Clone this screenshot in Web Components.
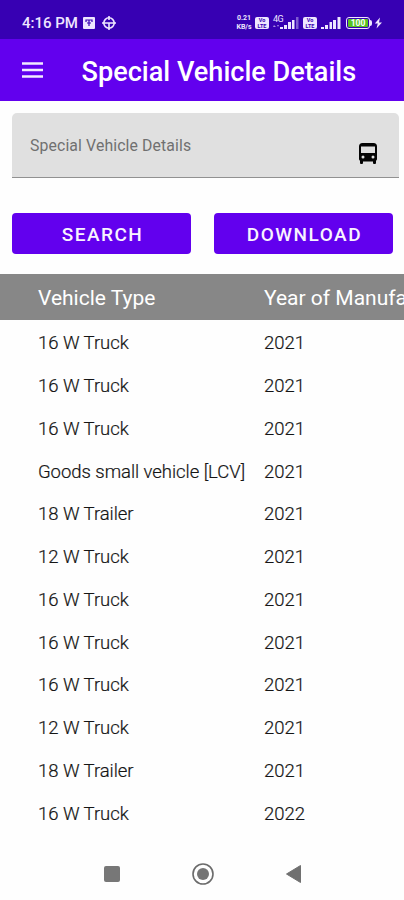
<!DOCTYPE html>
<html lang="en">
<head>
<meta charset="utf-8">
<title>Special Vehicle Details</title>
<style>
  body {
    margin: 0;
    background: #fefefe;
    font-family: Roboto, "Liberation Sans", sans-serif;
    overflow: hidden;
  }
</style>
</head>
<body>
<vehicle-screen></vehicle-screen>

<script>
class StatusBar extends HTMLElement {
  constructor() {
    super();
    const shadow = this.attachShadow({ mode: 'open' });
    shadow.innerHTML = `
    <style>
      :host {
        display: flex;
        align-items: center;
        box-sizing: border-box;
        height: 39px;
        padding: 6px 21px 0 22px;
        background: #3700b3;
        color: #eee6ff;
      }

      .time {
        width: 61px;
        font-size: 15px;
        font-weight: 500;
        white-space: nowrap;
      }

      .right {
        display: flex;
        align-items: center;
        margin-left: auto;
      }

      .speed {
        width: 18px;
        margin-right: 2px;
        font-size: 7px;
        font-weight: 700;
        line-height: 8.5px;
        text-align: center;
      }

      .volte {
        width: 14px;
        height: 12px;
        border-radius: 2px;
        background: #eee6ff;
        color: #3700b3;
        font-size: 5.5px;
        font-weight: 700;
        line-height: 6px;
        text-align: center;
      }

      .network {
        display: flex;
        align-items: flex-end;
        position: relative;
        width: 26px;
        height: 14px;
        margin: 0 4px 0 4px;
      }

      .network span {
        position: absolute;
        top: -1px;
        left: 0;
        font-size: 9px;
        line-height: 8px;
        letter-spacing: -0.5px;
      }

      .battery {
        box-sizing: border-box;
        width: 24px;
        height: 12px;
        margin-left: 5px;
        padding: 1px;
        border: 1px solid #eee6ff;
        border-radius: 3px;
      }

      .battery div {
        height: 8px;
        border-radius: 1px;
        background: #58c322;
        color: #fff;
        font-size: 8.5px;
        font-weight: 700;
        line-height: 8.5px;
        text-align: center;
      }

      .tip {
        width: 2px;
        height: 6px;
        border-radius: 0 2px 2px 0;
        background: #eee6ff;
      }

      svg {
        display: block;
        flex: none;
      }
    </style>
    <div class="time">4:16 PM</div>
    <svg width="12" height="12" viewBox="0 0 12 12">
      <rect width="12" height="12" rx="1" fill="#eee6ff"/>
      <path d="M3 5V3h6v2M6 3v6M4 6h4" fill="none" stroke="#3700b3" stroke-width="1.2"/>
    </svg>
    <svg width="14" height="14" viewBox="0 0 14 14" style="margin-left:7px" fill="none" stroke="#eee6ff" stroke-width="1.6">
      <circle cx="7" cy="7" r="5.2"/>
      <path d="M0 7h14M7 7v7M7 0v4"/>
    </svg>
    <div class="right">
      <div class="speed">0.21<br>KB/s</div>
      <div class="volte">Vo<br>LTE</div>
      <div class="network">
        <span>4G</span>
        <svg width="26" height="14" viewBox="0 0 26 14" fill="#eee6ff">
          <path d="M1 9l2 2H0zM4 9h2l-1 2z" opacity=".6"/>
          <path d="M7 11h3v2H7zM11 9h3v4h-3zM15 6h3v7h-3zM19 4h2.500v9H19z"/>
          <path d="M23 1h2.500v12H23z" opacity=".4"/>
        </svg>
      </div>
      <div class="volte">Vo<br>LTE</div>
      <svg width="20" height="14" viewBox="0 0 20 14" style="margin-left:4px" fill="#eee6ff">
        <path d="M0 11h3v2H0zM4 9h3v4H4zM8.500 6h2.500v7H8.500zM12 4h3v9h-3zM16.500 1h3v12h-3z"/>
      </svg>
      <div class="battery"><div>100</div></div>
      <div class="tip"></div>
      <svg width="10" height="12" viewBox="0 0 10 12" style="margin-left:1px" fill="#eee6ff">
        <path d="M7 .5L1.800 6.500h3L3.500 11.500 9 5.500H6z"/>
      </svg>
    </div>
    `;
  }
}

class AppBar extends HTMLElement {
  constructor() {
    super();
    const shadow = this.attachShadow({ mode: 'open' });
    shadow.innerHTML = `
    <style>
      :host {
        display: flex;
        align-items: center;
        height: 62px;
        padding-left: 22px;
        background: #6200ee;
        color: #fff;
      }

      svg {
        flex: none;
      }

      h1 {
        margin: 3px 0 0 38.5px;
        font-size: 27.1px;
        font-weight: 500;
        line-height: 32px;
        white-space: nowrap;
      }
    </style>
    <svg width="21" height="16" viewBox="0 0 21 16">
      <path d="M0 1.500h21M0 8h21M0 14.500h21" stroke="#f2eaff" stroke-width="2.600"/>
    </svg>
    <h1><slot></slot></h1>
    `;
  }
}

class VehicleField extends HTMLElement {
  constructor() {
    super();
    const shadow = this.attachShadow({ mode: 'open' });
    shadow.innerHTML = `
    <style>
      :host {
        display: flex;
        justify-content: space-between;
        box-sizing: border-box;
        height: 65px;
        margin: 12px 5px 0 12px;
        padding: 0 19px 0 18px;
        border-bottom: 1px solid #919191;
        border-radius: 5px 5px 0 0;
        background: #e0e0e0;
        color: #707070;
      }

      .label {
        margin-top: 23px;
        font-size: 15.8px;
        line-height: 20px;
        letter-spacing: 0.12px;
      }

      svg {
        margin-top: 28px;
      }
    </style>
    <div class="label"><slot></slot></div>
    <svg width="24" height="24" viewBox="0 0 24 24">
      <path fill-rule="evenodd" d="M6.500 2h11Q21 2 21 5.500V18q0 1.300-1 1.800V22q0 1-1 1h-1q-1 0-1-1v-1.500H7V22q0 1-1 1H5q-1 0-1-1v-2.200Q3 19.300 3 18V5.500Q3 2 6.500 2zM5 5.500V12h14V5.500zM7 14.500a1.500 1.500 0 1 0 0 3 1.500 1.500 0 1 0 0-3zM17 14.500a1.500 1.500 0 1 0 0 3 1.500 1.500 0 1 0 0-3z" fill="#050505"/>
    </svg>
    `;
  }
}

class ActionButton extends HTMLElement {
  constructor() {
    super();
    const shadow = this.attachShadow({ mode: 'open' });
    shadow.innerHTML = `
    <style>
      :host {
        display: block;
        flex: 1;
      }

      button {
        display: block;
        width: 100%;
        height: 41px;
        padding: 2px 0 0 2px;
        border: none;
        border-radius: 4px;
        background: #6200ee;
        color: #f8f3ff;
        font-family: inherit;
        font-size: 19px;
        font-weight: 500;
        letter-spacing: 1.5px;
        text-transform: uppercase;
      }
    </style>
    <button><slot></slot></button>
    `;
  }
}

class VehicleTable extends HTMLElement {
  constructor() {
    super();
    const shadow = this.attachShadow({ mode: 'open' });
    shadow.innerHTML = `
    <style>
      :host {
        display: block;
        overflow: hidden;
      }

      .head, .row {
        display: grid;
        grid-template-columns: 226px 250px;
        align-items: center;
        padding-left: 38px;
        white-space: nowrap;
      }

      .head {
        height: 44px;
        padding-top: 2px;
        margin-bottom: 2px;
        background: #878787;
        color: #fff;
        font-size: 21px;
      }

      .row {
        height: 42.75px;
        color: #151515;
        font-size: 18.5px;
        font-weight: 300;
        letter-spacing: -0.04px;
        -webkit-text-stroke: 0.2px #151515;
      }
    </style>
    <div class="head"><span>Vehicle Type</span><span>Year of Manufacture</span></div>
    <div class="body"></div>
    `;
    this.bodyElement = shadow.querySelector('.body');
  }

  set rows(rows) {
    this.bodyElement.innerHTML = rows
      .map(([type, year]) => `<div class="row"><span>${type}</span><span>${year}</span></div>`)
      .join('');
  }
}

class NavigationBar extends HTMLElement {
  constructor() {
    super();
    const shadow = this.attachShadow({ mode: 'open' });
    shadow.innerHTML = `
    <style>
      :host {
        display: flex;
        align-items: center;
        justify-content: space-between;
        height: 52px;
        padding: 0 102px 0 104px;
      }
    </style>
    <svg width="16" height="16"><rect width="16" height="16" rx="2" fill="#777"/></svg>
    <svg width="22" height="22" viewBox="0 0 22 22">
      <circle cx="11" cy="11" r="10" fill="none" stroke="#6b6b6b" stroke-width="1.600"/>
      <circle cx="11" cy="11" r="6" fill="#757575"/>
    </svg>
    <svg width="16" height="20" viewBox="0 0 16 20"><path d="M.5 10L14.500 1.500v17z" fill="#707070" stroke="#707070" stroke-linejoin="round"/></svg>
    `;
  }
}

class VehicleScreen extends HTMLElement {
  constructor() {
    super();
    const shadow = this.attachShadow({ mode: 'open' });
    shadow.innerHTML = `
    <style>
      :host {
        display: flex;
        flex-direction: column;
        width: 404px;
        height: 900px;
        overflow: hidden;
      }

      .actions {
        display: flex;
        gap: 23px;
        margin: 35px 11px 20px 12px;
      }

      navigation-bar {
        margin-top: auto;
      }
    </style>
    <status-bar></status-bar>
    <app-bar>Special Vehicle Details</app-bar>
    <vehicle-field>Special Vehicle Details</vehicle-field>
    <div class="actions">
      <action-button>Search</action-button>
      <action-button>Download</action-button>
    </div>
    <vehicle-table></vehicle-table>
    <navigation-bar></navigation-bar>
    `;

    shadow.querySelector('vehicle-table').rows = [
      ['16 W Truck', 2021],
      ['16 W Truck', 2021],
      ['16 W Truck', 2021],
      ['Goods small vehicle [LCV]', 2021],
      ['18 W Trailer', 2021],
      ['12 W Truck', 2021],
      ['16 W Truck', 2021],
      ['16 W Truck', 2021],
      ['16 W Truck', 2021],
      ['12 W Truck', 2021],
      ['18 W Trailer', 2021],
      ['16 W Truck', 2022],
    ];
  }
}

customElements.define('status-bar', StatusBar);
customElements.define('app-bar', AppBar);
customElements.define('vehicle-field', VehicleField);
customElements.define('action-button', ActionButton);
customElements.define('vehicle-table', VehicleTable);
customElements.define('navigation-bar', NavigationBar);
customElements.define('vehicle-screen', VehicleScreen);
</script>
</body>
</html>
